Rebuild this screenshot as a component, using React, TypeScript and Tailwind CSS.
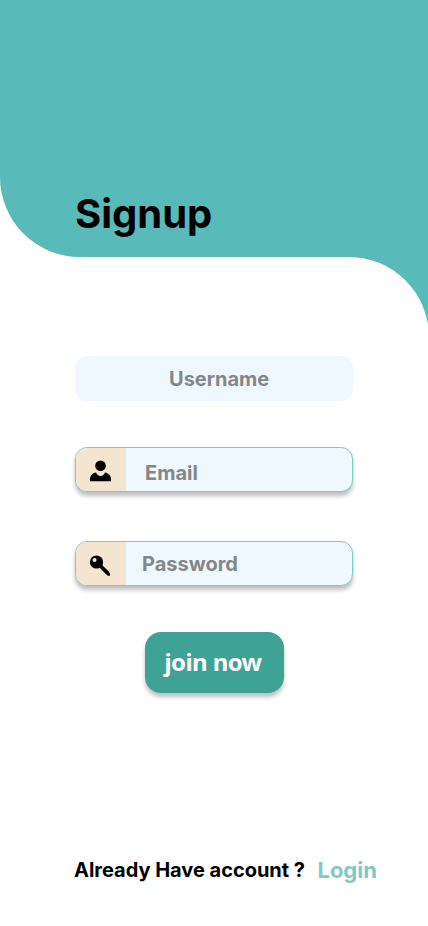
import type { ReactNode } from "react";

function UserIcon() {
  return (
    <svg width="22" height="22" viewBox="0 0 22 22" fill="black">
      <circle cx="11.5" cy="5.8" r="5.3" />
      <path d="M1 21.3V19.3C1 15.8 3.5 13 7.1 12.5C7.7 14.6 9.5 16 11.5 16S15.3 14.6 15.9 12.5C19.5 13 22 15.8 22 19.3V21.3Z" />
    </svg>
  );
}

function KeyIcon() {
  return (
    <svg width="22" height="22" viewBox="0 0 22 22" fill="none">
      <path d="M10 10.5L18.6 19.1" stroke="black" strokeWidth="3.8" />
      <path d="M17 20L19.3 17.5L21 19.4V21.8H18.7Z" fill="black" />
      <circle cx="7.5" cy="8" r="6.6" fill="black" />
      <circle cx="5.6" cy="6" r="2" fill="#f4e5d0" />
    </svg>
  );
}

function Field({ icon, label, textClass }: { icon: ReactNode; label: string; textClass: string }) {
  return (
    <div className="flex h-[45px] w-[278px] overflow-hidden rounded-xl border border-[#7cc9c3] bg-[#eff7ff] shadow-[0_4px_4px_rgba(0,0,0,0.25)]">
      <div className="flex w-[50px] items-center justify-center bg-[#f4e5d0] pt-[3px] pr-[2px]">{icon}</div>
      <span className={`text-[20px] leading-6 font-bold text-[#868686] ${textClass}`}>{label}</span>
    </div>
  );
}

export default function App() {
  return (
    <div className="h-[926px] w-full overflow-hidden bg-white font-['Inter',sans-serif]">
      <header className="h-[257px] rounded-bl-[80px] bg-[#59baba] pt-[190px] pl-[75px]">
        <h1 className="text-[40px] leading-[48px] font-bold text-black">Signup</h1>
      </header>
      <div className="h-[669px] bg-[#59baba]">
        <main className="-mr-px flex h-full flex-col rounded-tr-[80px] bg-white pt-[99px] pl-[75px]">
          <div className="h-[45px] w-[278px] rounded-xl bg-[#eff7ff] pt-[11px] pl-[94px] text-[20px] leading-6 font-bold text-[#868686]">
            Username
          </div>
          <div className="mt-[46px]">
            <Field icon={<UserIcon />} label="Email" textClass="pt-[13px] pl-[19px]" />
          </div>
          <div className="mt-[49px]">
            <Field icon={<KeyIcon />} label="Password" textClass="pt-[10px] pl-4" />
          </div>
          <button className="mt-[46px] ml-[70px] h-[61px] w-[139px] rounded-2xl bg-[#3ea295] pr-[3px] pb-[2px] font-['Noto_Sans',sans-serif] text-[24px] font-bold tracking-[-0.6px] text-white shadow-[0_4px_4px_rgba(0,0,0,0.25)]">
            join now
          </button>
          <footer className="mt-[164px] -ml-px flex whitespace-nowrap">
            <span className="pt-px text-[20px] leading-6 font-bold tracking-[-0.02px] text-black">Already Have account ?</span>
            <a className="ml-[12.5px] text-[22px] leading-[27px] font-bold text-[#7fcac4]">Login</a>
          </footer>
        </main>
      </div>
    </div>
  );
}
